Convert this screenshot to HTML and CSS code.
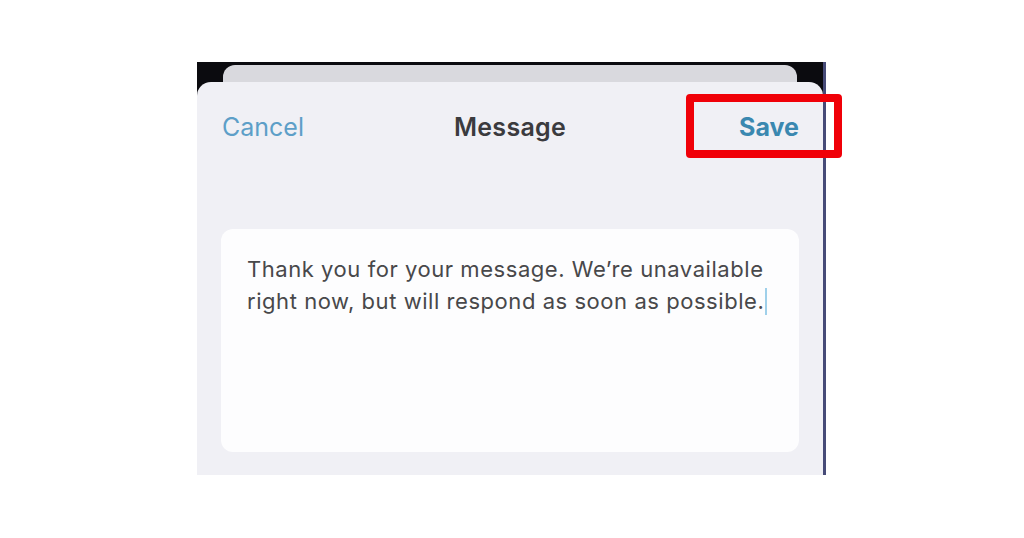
FILE: index.html
```html
<!DOCTYPE html>
<html lang="en">

<head>
  <meta charset="UTF-8">
  <meta name="viewport" content="width=device-width, initial-scale=1.0">
  <title>Message</title>
  <link rel="stylesheet" href="styles.css">
</head>

<body>
  <div id="shot">
    <div class="peek"></div>
    <div class="sheet">
      <div class="bar">
        <span class="cancel">Cancel</span>
        <span class="title">Message</span>
        <span class="save">Save</span>
      </div>
      <div class="box">
        <p>Thank you for your message. We’re unavailable right now, but will respond as soon as possible.<span class="caret"></span></p>
      </div>
    </div>
    <div class="mark"></div>
  </div>
</body>

</html>
```

FILE: styles.css
```css
body {
  background-color: #ffffff;
  margin: 0;
  font-family: "Inter", "Liberation Sans", sans-serif;
}

#shot {
  position: relative;
  box-sizing: border-box;
  width: 629px;
  height: 413px;
  margin: 62px 0 0 197px;
  background: #0b0b0f;
  border-right: 3px solid #474b78;
  display: flex;
  flex-direction: column;
}

.peek {
  height: 17px;
  margin: 3px 26px 0 26px;
  background: #d9d9de;
  border-radius: 12px 12px 0 0;
}

.sheet {
  flex: 1;
  background: #f0f0f5;
  border-radius: 14px 14px 0 0;
  display: flex;
  flex-direction: column;
  padding: 0 24px 23px 24px;
}

.bar {
  height: 90px;
  display: grid;
  grid-template-columns: 1fr auto 1fr;
  align-items: center;
  font-size: 25px;
  margin-bottom: 57px;
}

.cancel {
  color: #5d9fc8;
  padding-left: 1px;
}

.title {
  color: #3b3b3e;
  font-weight: 600;
  letter-spacing: 0.3px;
}

.save {
  color: #3a88b0;
  font-weight: 700;
  text-align: right;
}

.box {
  flex: 1;
  background: #fdfdfe;
  border-radius: 12px;
  padding: 24px 26px;
}

.box p {
  margin: 0;
  font-size: 22px;
  letter-spacing: 0.55px;
  line-height: 32px;
  color: #48484a;
}

.caret {
  display: inline-block;
  width: 2px;
  height: 27px;
  margin-left: 1px;
  vertical-align: -6px;
  background: #9fd0ea;
}

.mark {
  position: absolute;
  left: 489px;
  top: 32px;
  width: 156px;
  height: 64px;
  box-sizing: border-box;
  border: 8px solid #f00008;
  border-radius: 4px;
}
```
